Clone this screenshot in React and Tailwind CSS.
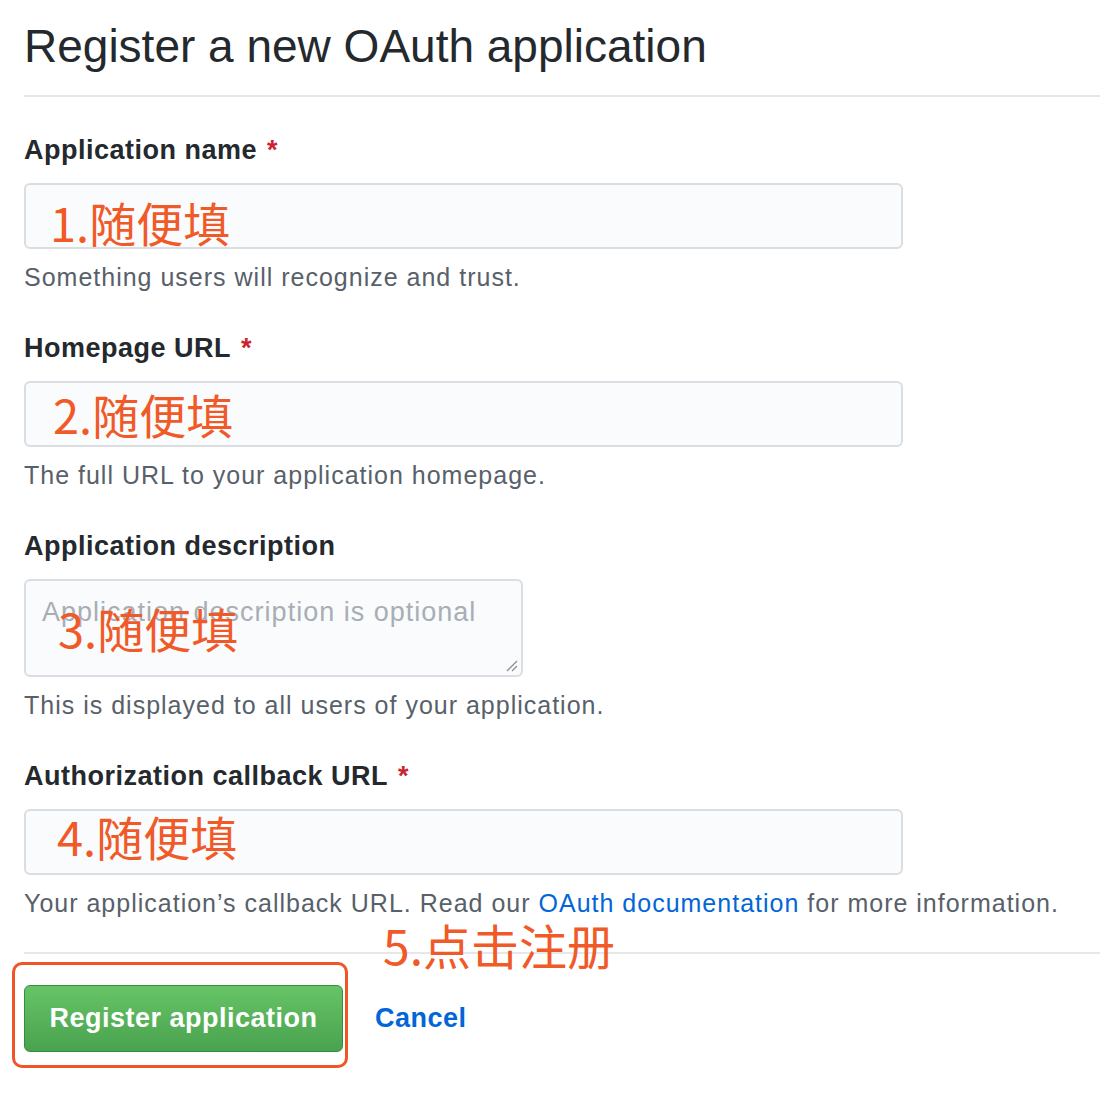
import React from 'react'

const sans = "font-['Liberation_Sans',Arial,sans-serif]"
const cjk = "font-['Noto_Sans_CJK_SC',sans-serif]"

const Label = ({ children, required }) => (
  <div className={`h-[36px] leading-[36px] text-[27px] tracking-[0.5px] font-bold text-[#24292e] ${sans}`}>
    {children}
    {required && <span className="ml-[10px] text-[#cb2431]">*</span>}
  </div>
)

const Note = ({ children }) => (
  <div className={`h-[32px] leading-[32px] text-[25px] tracking-[1px] text-[#586069] whitespace-nowrap ${sans}`}>{children}</div>
)

const Mark = ({ children, className }) => (
  <span className={`absolute leading-[48px] text-[47px] text-[#f05a28] whitespace-nowrap ${cjk} ${className}`}>
    {children}
  </span>
)

const Field = ({ mark, markClass }) => (
  <div className="relative mt-[15px] mb-[12px] h-[66px] w-[879px] rounded-[6px] border-2 border-[#dadde1] bg-[#fafbfc]">
    <Mark className={markClass}>{mark}</Mark>
  </div>
)

export default function App() {
  return (
    <div className="relative min-h-[1102px] w-[1100px] bg-white pl-[24px] text-[#24292e]">
      <h1 className={`pt-[18px] h-[74px] leading-[56px] text-[46px] font-normal ${sans}`}>
        Register a new OAuth application
      </h1>
      <div className="mt-[21px] h-[2px] bg-[#e5e7eb]" />

      <div className="mt-[35px]">
        <Label required>Application name</Label>
        <Field mark="1.随便填" markClass="left-[24px] top-[13px]" />
        <Note>Something users will recognize and trust.</Note>
      </div>

      <div className="mt-[37px]">
        <Label required>Homepage URL</Label>
        <Field mark="2.随便填" markClass="left-[27px] top-[7px]" />
        <Note>The full URL to your application homepage.</Note>
      </div>

      <div className="mt-[37px]">
        <Label>Application description</Label>
        <div className="relative mt-[15px] mb-[12px] h-[98px] w-[499px] rounded-[6px] border-2 border-[#dadde1] bg-[#fafbfc]">
          <span className={`absolute left-[16px] top-[15px] leading-[32px] text-[27px] tracking-[1px] text-[#a8aeb5] whitespace-nowrap ${sans}`}>
            Application description is optional
          </span>
          <Mark className="left-[32px] top-[23px]">3.随便填</Mark>
          <svg className="absolute right-[3px] bottom-[3px]" width="14" height="14" viewBox="0 0 14 14">
            <path d="M13 3 L3 13 M13 8 L8 13" stroke="#8a8f95" strokeWidth="1.3" />
          </svg>
        </div>
        <Note>This is displayed to all users of your application.</Note>
      </div>

      <div className="mt-[37px]">
        <Label required>Authorization callback URL</Label>
        <Field mark="4.随便填" markClass="left-[31px] top-[1px]" />
        <Note>
          Your application’s callback URL. Read our{' '}
          <span className="text-[#0366d6]">OAuth documentation</span> for more information.
        </Note>
      </div>

      <div className="mt-[33px] h-[2px] bg-[#e5e7eb]" />

      <div className="mt-[31px] flex items-center gap-[32px]">
        <button
          className={`h-[67px] w-[319px] rounded-[6px] border border-[#2f8f43] bg-gradient-to-b from-[#66c466] to-[#4aa24f] text-[27px] tracking-[0.5px] font-bold text-white ${sans}`}
        >
          Register application
        </button>
        <span className={`text-[27px] tracking-[0.5px] font-bold text-[#0366d6] ${sans}`}>Cancel</span>
      </div>

      <Mark className="left-[383px] top-[920px] text-[48px]">5.点击注册</Mark>
      <div className="absolute left-[12px] top-[962px] h-[106px] w-[336px] rounded-[10px] border-[3px] border-[#ef5527]" />
    </div>
  )
}
